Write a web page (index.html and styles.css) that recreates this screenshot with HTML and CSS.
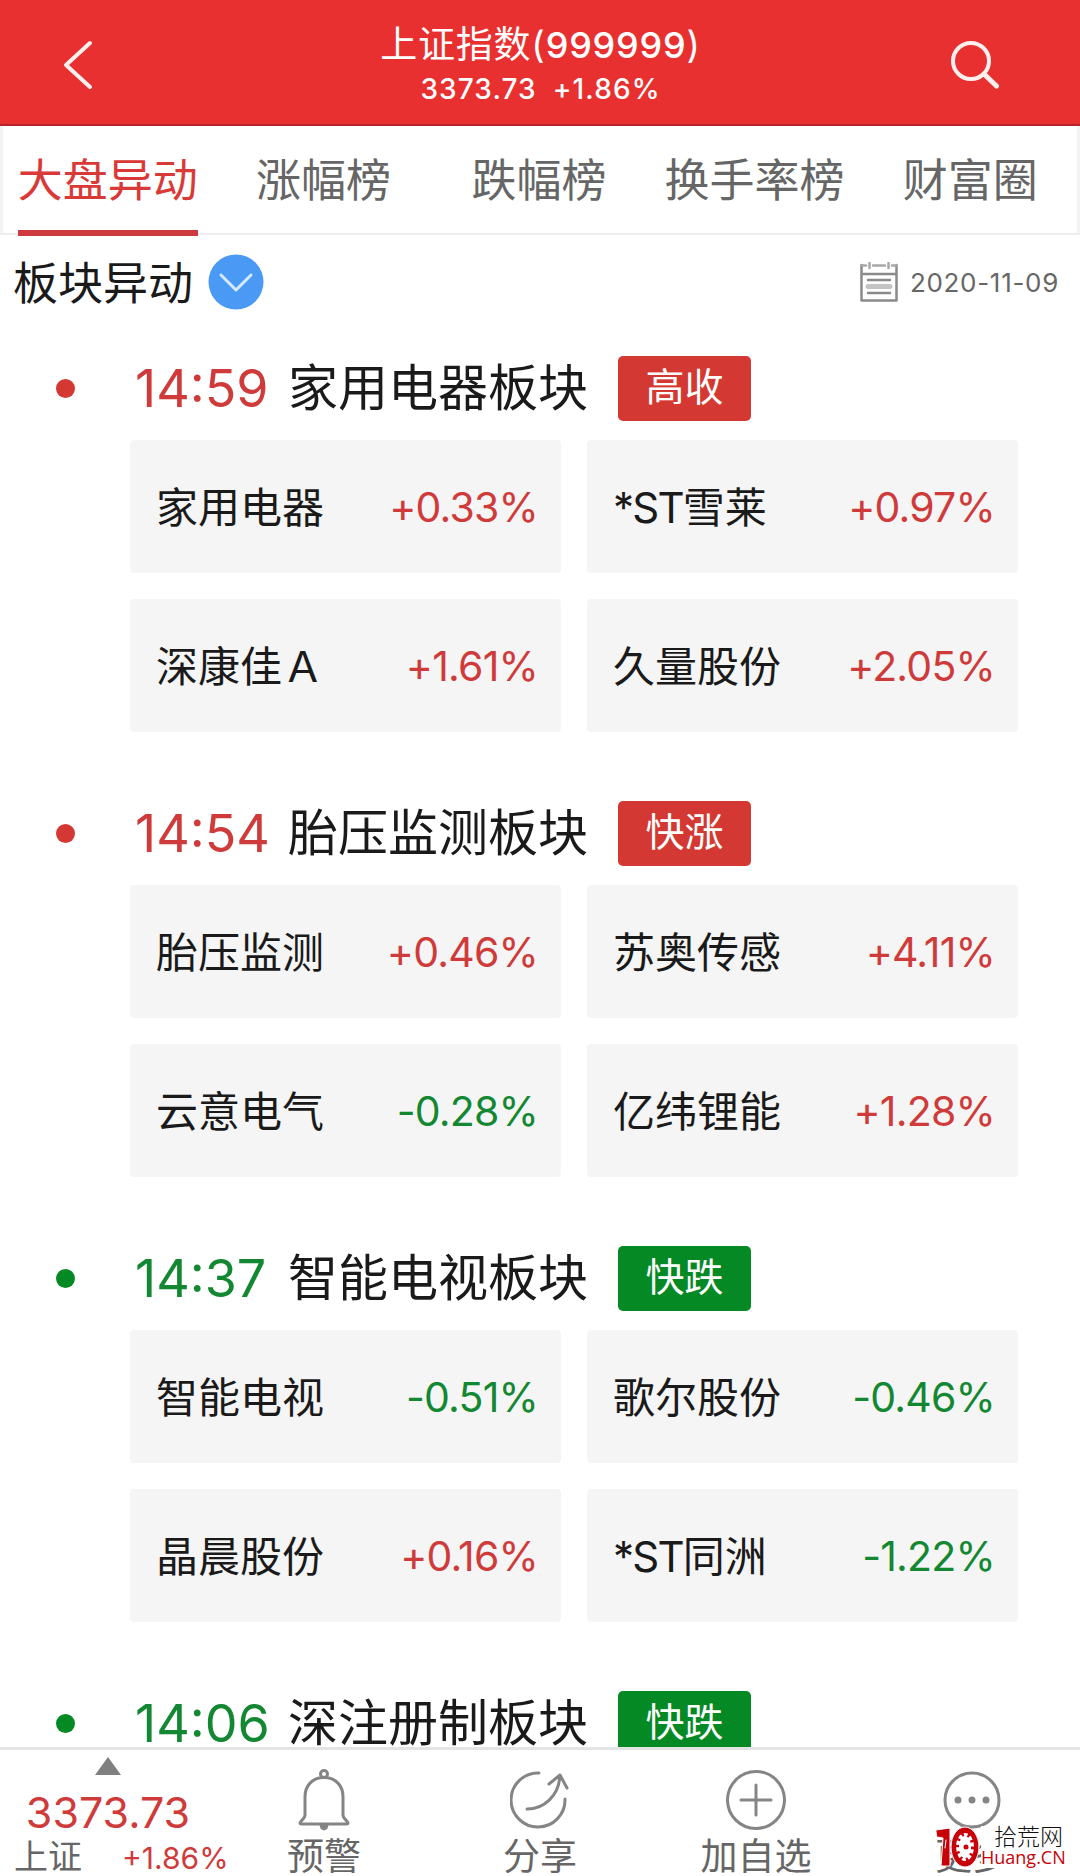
FILE: index.html
```html
<!DOCTYPE html>
<html lang="zh-CN">
<head>
  <meta charset="UTF-8">
  <title>上证指数</title>
  <link rel="stylesheet" href="styles.css">
</head>
<body>

  <div id="app">
    <header class="header">
      <svg class="back" width="32" height="50" viewBox="0 0 32 50"><path d="M28 3 L4 25 L28 47"/></svg>
      <div class="header-title">
        <h1>上证指数(<b>999999</b>)</h1>
        <p><span>3373.73</span><span>+1.86%</span></p>
      </div>
      <svg class="search" width="50" height="50" viewBox="0 0 50 50"><circle cx="21" cy="21" r="18"/><path class="handle" d="M34 34 L46.500 46"/></svg>
    </header>

    <nav class="tabs">
      <a class="tab active">大盘异动</a>
      <a class="tab">涨幅榜</a>
      <a class="tab">跌幅榜</a>
      <a class="tab">换手率榜</a>
      <a class="tab">财富圈</a>
    </nav>

    <div class="filter">
      <span class="filter-name">板块异动</span>
      <svg class="filter-arrow" width="56" height="56" viewBox="0 0 56 56"><circle cx="28" cy="28" r="27.500"/><path d="M13 21 L28 36 L43 21"/></svg>
      <svg class="calendar" width="38" height="40" viewBox="0 0 38 40">
        <path class="frame" d="M1.500 3 V38.500 H36.500 V3 M1.500 12 H36.500"/>
        <path class="rings" d="M2 3.500 H6 M13 3.500 H25 M32 3.500 H36 M9.500 1 V6 M28.500 1 V6"/>
        <path class="lines" d="M8 18 H30 M8 31 H30"/>
        <path class="band" d="M8 24.500 H30"/>
      </svg>
      <span class="date">2020-11-09</span>
    </div>

    <main class="list">
      <section class="group up">
        <div class="group-head"><i class="dot"></i><span class="time">14:59</span><h2>家用电器板块</h2><span class="tag">高收</span></div>
        <div class="cards">
          <div class="card"><span>家用电器</span><b class="up">+0.33%</b></div>
          <div class="card"><span><i class="st">*ST</i>雪莱</span><b class="up">+0.97%</b></div>
          <div class="card"><span>深康佳Ａ</span><b class="up">+1.61%</b></div>
          <div class="card"><span>久量股份</span><b class="up">+2.05%</b></div>
        </div>
      </section>

      <section class="group up">
        <div class="group-head"><i class="dot"></i><span class="time">14:54</span><h2>胎压监测板块</h2><span class="tag">快涨</span></div>
        <div class="cards">
          <div class="card"><span>胎压监测</span><b class="up">+0.46%</b></div>
          <div class="card"><span>苏奥传感</span><b class="up">+4.11%</b></div>
          <div class="card"><span>云意电气</span><b class="down">-0.28%</b></div>
          <div class="card"><span>亿纬锂能</span><b class="up">+1.28%</b></div>
        </div>
      </section>

      <section class="group down">
        <div class="group-head"><i class="dot"></i><span class="time">14:37</span><h2>智能电视板块</h2><span class="tag">快跌</span></div>
        <div class="cards">
          <div class="card"><span>智能电视</span><b class="down">-0.51%</b></div>
          <div class="card"><span>歌尔股份</span><b class="down">-0.46%</b></div>
          <div class="card"><span>晶晨股份</span><b class="up">+0.16%</b></div>
          <div class="card"><span><i class="st">*ST</i>同洲</span><b class="down">-1.22%</b></div>
        </div>
      </section>

      <section class="group down">
        <div class="group-head"><i class="dot"></i><span class="time">14:06</span><h2>深注册制板块</h2><span class="tag">快跌</span></div>
      </section>
    </main>

    <footer class="bottom-bar">
      <div class="quote">
        <i class="triangle"></i>
        <strong>3373.73</strong>
        <p><span>上证</span><em>+1.86%</em></p>
      </div>
      <div class="action">
        <svg width="60" height="64" viewBox="0 0 60 64">
          <circle cx="30" cy="6" r="3.500"/>
          <path d="M30 9.500 C18 9.500 11 18 11 29 V47 C11 51 6 53 6 55 Q6 56 8 56 H52 Q54 56 54 55 C54 53 49 51 49 47 V29 C49 18 42 9.500 30 9.500 Z"/>
          <path class="solid" d="M27 57 H33 L32 60 L30 61 L28 60 Z"/>
        </svg>
        <span>预警</span>
      </div>
      <div class="action">
        <svg width="60" height="64" viewBox="0 0 60 64">
          <path d="M29 5 A27 27 0 1 0 55 31"/>
          <path d="M17 41 C34 41 49 28 50 7 M39 16 L50 7 L57 20"/>
        </svg>
        <span>分享</span>
      </div>
      <div class="action">
        <svg width="60" height="64" viewBox="0 0 60 64">
          <circle cx="30" cy="32" r="28.500"/>
          <path d="M15 32 H45 M30 17 V47"/>
        </svg>
        <span>加自选</span>
      </div>
      <div class="action">
        <svg width="60" height="64" viewBox="0 0 60 64">
          <circle cx="30" cy="32" r="27"/>
          <circle class="solid" cx="16" cy="32" r="2"/><circle class="solid" cx="30" cy="32" r="2"/><circle class="solid" cx="44" cy="32" r="2"/>
        </svg>
        <span>更多</span>
      </div>
      <div class="watermark">
        <svg width="46" height="42" viewBox="0 0 46 42">
          <path class="one" d="M1 4 L15 2 V40 H6 L8 12 L2 11 Z"/>
          <path class="slit" d="M11 14 L10 22"/>
          <ellipse class="zero" cx="30" cy="21" rx="14" ry="20"/>
          <ellipse class="hole" cx="30" cy="21" rx="9" ry="14"/>
          <ellipse class="teeth" cx="30" cy="21" rx="8" ry="13"/>
          <circle class="hub" cx="31" cy="21" r="2.500"/>
        </svg>
        <p><span>拾荒网</span><em>Huang.CN</em></p>
      </div>
    </footer>
  </div>

</body>
</html>
```
FILE: styles.css
```css
* {
  box-sizing: border-box;
}

body {
  margin: 0;
  background: #fff;
  color: #1a1a1a;
  font-family: Inter, "Noto Sans CJK SC", sans-serif;
}

h1, h2, p {
  margin: 0;
  font-weight: 400;
}

b, i, em, strong {
  font-weight: 400;
  font-style: normal;
}

svg {
  fill: none;
  stroke-linecap: round;
  stroke-linejoin: round;
}

#app {
  display: flex;
  flex-direction: column;
  height: 1876px;
  overflow: hidden;
}

/* header */
.header {
  display: flex;
  justify-content: space-between;
  height: 126px;
  padding: 20px 80px 0 62px;
  background: #e93030;
  border-bottom: 2px solid #b3242b;
  color: #fff;
}

.header svg {
  margin-top: 20px;
  stroke: #fff0ee;
  stroke-width: 4;
}

.header .handle {
  stroke-width: 5;
}

.header-title {
  padding-left: 37px;
  text-align: center;
}

.header h1 {
  font-size: 37px;
  line-height: 50px;
  letter-spacing: 0.8px;
}

.header h1 b {
  font-size: 36px;
  font-weight: 500;
}

.header p {
  display: flex;
  justify-content: center;
  gap: 16px;
  font-size: 28px;
  line-height: 38px;
  letter-spacing: 1.1px;
  font-weight: 500;
}

/* tabs */
.tabs {
  display: grid;
  grid-template-columns: repeat(5, 1fr);
  justify-items: center;
  height: 109px;
  padding-right: 2px;
  border-bottom: 2px solid #eee;
  box-shadow: inset 3px 0 #f3f3f3, inset -3px 0 #f3f3f3;
}

.tab {
  height: 110px;
  font-size: 45px;
  line-height: 110px;
  color: #666;
}

.tab.active {
  color: #d93a38;
  border-bottom: 6px solid #cc3a40;
}

/* filter */
.filter {
  display: flex;
  align-items: center;
  height: 94px;
  padding: 0 21px 0 13px;
}

.filter-name {
  padding-bottom: 4px;
  font-size: 45px;
}

.filter-arrow {
  margin: 0 auto 0 15px;
}

.filter-arrow circle {
  fill: #4a9af5;
}

.filter-arrow path {
  stroke: #d6eaff;
  stroke-width: 3;
}

.calendar {
  margin-right: 12px;
  stroke: #8a8a8a;
  stroke-width: 2.5;
}

.calendar .rings {
  stroke: #a8a8a8;
}

.calendar .band {
  stroke: #c4c4c4;
  stroke-width: 5;
}

.date {
  font-size: 26px;
  letter-spacing: 0.7px;
  color: #666;
}

/* list */
.list {
  flex: 1;
  min-height: 0;
  padding-top: 15px;
  overflow: hidden;
}

.group {
  height: 445px;
}

.group-head {
  display: flex;
  align-items: center;
  height: 88px;
  padding-left: 56px;
}

.dot {
  width: 19px;
  height: 19px;
  border-radius: 50%;
}

.time {
  width: 153px;
  margin-left: 60px;
  font-size: 52px;
  white-space: nowrap;
}

.group h2 {
  width: 330px;
  font-size: 50px;
  line-height: 64px;
}

.tag {
  width: 133px;
  height: 65px;
  border-radius: 5px;
  font-size: 39px;
  line-height: 62px;
  text-align: center;
  color: #fff;
}

.up {
  color: #cf3b3b;
}

.down {
  color: #138732;
}

.up .dot,
.up .tag {
  background: #d43832;
}

.down .dot,
.down .tag {
  background: #048924;
}

.group h2,
.card {
  color: #1a1a1a;
}

.cards {
  display: grid;
  grid-template-columns: 431px 431px;
  gap: 26px;
  margin: 8px 0 0 130px;
}

.card {
  display: flex;
  align-items: center;
  justify-content: space-between;
  height: 133px;
  padding: 0 23px 0 26px;
  border-radius: 4px;
  background: #f5f5f5;
  font-size: 42px;
}

.card span {
  padding-bottom: 4px;
}

.card .st {
  letter-spacing: -1.8px;
}

.card b {
  font-size: 41px;
  letter-spacing: -0.8px;
}

/* bottom bar */
.bottom-bar {
  position: relative;
  display: grid;
  grid-template-columns: repeat(5, 216px);
  height: 129px;
  border-top: 3px solid #e4e4e4;
  background: #fff;
  color: #666;
}

.quote {
  display: flex;
  flex-direction: column;
  align-items: center;
  padding-top: 7px;
}

.triangle {
  border: solid transparent;
  border-width: 0 13.5px 18px;
  border-bottom-color: #808080;
}

.quote strong {
  margin-top: 11px;
  font-size: 43px;
  line-height: 52px;
  color: #cf3b3b;
}

.quote p {
  display: flex;
  align-items: center;
  gap: 40px;
  width: 216px;
  padding-left: 14px;
  font-size: 34px;
  line-height: 38px;
  white-space: nowrap;
}

.quote em {
  padding-top: 3px;
  font-size: 30px;
  line-height: 35px;
  color: #cf3b3b;
}

.action {
  display: flex;
  flex-direction: column;
  align-items: center;
  padding-top: 18px;
  font-size: 37px;
  line-height: 49px;
}

.action svg {
  stroke: #858585;
  stroke-width: 3;
}

.action .solid {
  fill: #858585;
}

/* site mark */
.watermark {
  position: absolute;
  left: 935px;
  bottom: 8px;
  display: flex;
}

.watermark p {
  padding-top: 1px;
  background: #fff;
}

.one,
.zero {
  fill: #c8000a;
  stroke: #fff;
}

.slit {
  stroke: #fff;
}

.hole {
  fill: #fff;
}

.teeth {
  stroke: #c8000a;
  stroke-width: 4;
  stroke-linecap: butt;
  stroke-dasharray: 2.4 4.2;
}

.hub {
  fill: #c8000a;
}

.watermark span,
.watermark em {
  display: block;
  font-size: 23px;
  line-height: 20px;
  color: #111;
}

.watermark span {
  padding-left: 13px;
  font-weight: 300;
}

.watermark em {
  font-family: "Open Sans", sans-serif;
  font-size: 18px;
  line-height: 21px;
  color: #c8000a;
}
```
